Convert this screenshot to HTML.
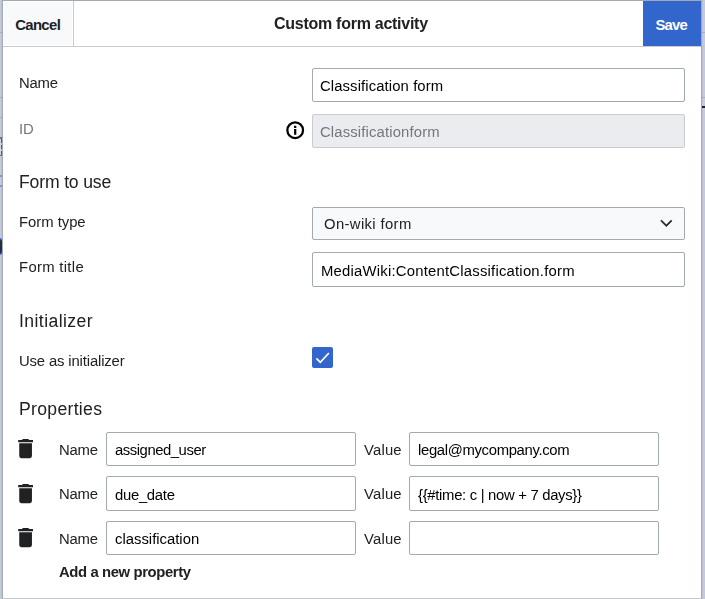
<!DOCTYPE html>
<html lang="en">
<head>
<meta charset="utf-8">
<title>Custom form activity</title>
<style>
html,body{margin:0;padding:0;}
body{width:705px;height:599px;overflow:hidden;background:#c4cadb;font-family:"Liberation Sans",sans-serif;color:#202122;position:relative;}
.abs{position:absolute;}
.bgl{position:absolute;background:#a9afbf;height:1px;}
#dlg{position:absolute;left:2px;top:0;width:700px;height:599px;box-sizing:border-box;border:1px solid #a2a9b1;border-bottom-color:#c6c9ce;background:#fff;box-shadow:0 0 0 1px rgba(40,50,80,.045);}
#hdr{position:absolute;left:3px;top:1px;width:698px;height:45px;border-bottom:1px solid #c8ccd1;background:#fff;}
#cancel{position:absolute;left:4px;top:2px;width:68px;height:43px;background:#f8f9fa;}
#cancelb{position:absolute;left:73px;top:1px;width:1px;height:45px;background:#c8ccd1;}
#save{position:absolute;left:643px;top:1px;width:58px;height:45px;background:#3366cc;}
.t{position:absolute;white-space:nowrap;line-height:1;will-change:transform;}
#t_cancel,#t_save{will-change:auto;}
.inp{position:absolute;box-sizing:border-box;border:1px solid #a2a9b1;border-radius:2px;background:#fff;}
.inp.dis{background:#eaecf0;border-color:#c8ccd1;}
.inp.dd{background:#f8f9fa;}
</style>
</head>
<body>
<div class="bgl" style="left:0;top:32px;width:705px;"></div>
<div class="bgl" style="left:0;top:97px;width:705px;"></div>
<div class="bgl" style="left:0;top:117px;width:2px;"></div>
<div class="bgl" style="left:702px;top:106px;width:3px;height:2px;background:#1a1f3a;"></div>
<div class="abs" style="left:0;top:137px;width:2px;height:19px;background:#6f7485;"></div>
<div class="abs" style="left:0;top:139px;width:1px;height:16px;background:#d4d8dc;"></div>
<div class="abs" style="left:1px;top:139px;width:1px;height:16px;background:#c9cdd6;"></div>
<div class="abs" style="left:1px;top:139px;width:1px;height:4px;background:#8a4b3c;"></div>
<div class="abs" style="left:1px;top:145px;width:1px;height:4px;background:#8a4b3c;"></div>
<div class="abs" style="left:1px;top:151px;width:1px;height:4px;background:#8a4b3c;"></div>
<div class="abs" style="left:0;top:175px;width:2px;height:2px;background:#7d9ad6;"></div>
<div class="abs" style="left:0;top:185px;width:2px;height:2px;background:#7d9ad6;"></div>
<div class="abs" style="left:-3px;top:238px;width:5px;height:17px;border-radius:3px;background:#2b59b8;"></div>
<div class="abs" style="left:-3px;top:240px;width:5px;height:13px;border-radius:2px;background:#272c42;"></div>
<div id="dlg"></div>
<div id="hdr"></div>
<div id="cancel"></div><div id="cancelb"></div>
<div id="save"></div>
<div class="t" id="t_cancel" style="left:15.16px;top:18.32px;font-size:14.857px;letter-spacing:-0.613px;font-weight:bold;">Cancel</div>
<div class="t" id="t_title" style="left:274.25px;top:15.86px;font-size:16px;letter-spacing:-0.268px;font-weight:bold;">Custom form activity</div>
<div class="t" id="t_save" style="left:655.39px;top:18.42px;font-size:14.857px;letter-spacing:-0.774px;font-weight:bold;color:#ffffff;">Save</div>

<div class="t" id="l_name" style="left:18.90px;top:76.22px;font-size:14.857px;letter-spacing:-0.233px;">Name</div>
<div class="inp" id="i_name" style="left:312px;top:68px;width:373px;height:34px;"></div>
<div class="t" id="v_name" style="left:319.90px;top:79.22px;font-size:14.857px;letter-spacing:0.105px;color:#000000;">Classification form</div>

<div class="t" id="l_id" style="left:19.20px;top:122.32px;font-size:14.857px;letter-spacing:-0.207px;color:#72777d;">ID</div>
<svg class="abs" id="ic_info" style="left:283.85px;top:118.65px;" width="22.4" height="22.4" viewBox="0 0 20 20"><path d="M4 10a6 6 0 1 0 12 0 6 6 0 0 0-12 0m6-8a8 8 0 1 1 0 16 8 8 0 0 1 0-16m1 7v5H9V9zm0-1V6H9v2z" fill="#000"/></svg>
<div class="inp dis" id="i_id" style="left:312px;top:114px;width:373px;height:34px;"></div>
<div class="t" id="v_id" style="left:319.90px;top:125.32px;font-size:14.857px;letter-spacing:0.145px;color:#72777d;">Classificationform</div>

<div class="t" id="h_form" style="left:19.10px;top:173.60px;font-size:17.6px;letter-spacing:-0.160px;">Form to use</div>

<div class="t" id="l_ftype" style="left:18.56px;top:214.82px;font-size:14.857px;letter-spacing:-0.024px;">Form type</div>
<div class="inp dd" id="i_ftype" style="left:312px;top:207px;width:373px;height:33px;"></div>
<div class="t" id="v_ftype" style="left:324.43px;top:217.02px;font-size:14.857px;letter-spacing:0.360px;">On-wiki form</div>
<svg class="abs" id="ic_chev" style="left:660.1px;top:217.2px;overflow:visible;" width="12.73" height="12.73" viewBox="0 0 20 20"><path d="m17.500 4.750-7.500 7.500-7.500-7.500L1 6.250l9 9 9-9z" fill="#202122" stroke="#202122" stroke-width="0.700" stroke-linejoin="miter"/></svg>

<div class="t" id="l_ftitle" style="left:18.56px;top:259.82px;font-size:14.857px;letter-spacing:0.312px;">Form title</div>
<div class="inp" id="i_ftitle" style="left:312px;top:252px;width:373px;height:35px;"></div>
<div class="t" id="v_ftitle" style="left:320.61px;top:264.32px;font-size:14.857px;letter-spacing:0.220px;color:#000000;">MediaWiki:ContentClassification.form</div>

<div class="t" id="h_init" style="left:18.80px;top:312.70px;font-size:17.6px;letter-spacing:0.415px;">Initializer</div>

<div class="t" id="l_use" style="left:19.20px;top:354.32px;font-size:14.857px;letter-spacing:-0.142px;">Use as initializer</div>
<div class="abs" id="cb" style="left:312px;top:347px;width:21px;height:21px;background:#3366cc;border-radius:2px;"></div>
<svg class="abs" id="ic_chk" style="left:315px;top:351px;" width="15" height="13" viewBox="0 0 15 13"><path d="M1.400 7.400 L5.300 11.300 L13.900 2" fill="none" stroke="#fff" stroke-width="1.700"/></svg>

<div class="t" id="h_props" style="left:18.80px;top:400.60px;font-size:17.6px;letter-spacing:0.311px;">Properties</div>

<svg class="abs" id="tr1" style="left:15.05px;top:437.75px;" width="21.2" height="21.2" viewBox="0 0 20 20"><path d="M17 2h-3.500l-1-1h-5l-1 1H3v2h14zM4 17a2 2 0 0 0 2 2h8a2 2 0 0 0 2-2V5H4z" fill="#202122"/></svg>
<div class="t" id="p1_n" style="left:58.90px;top:443.32px;font-size:14.857px;letter-spacing:-0.233px;">Name</div>
<div class="inp" id="i_p1n" style="left:106px;top:432px;width:250px;height:34px;"></div>
<div class="t" id="p1_nv" style="left:114.74px;top:443.32px;font-size:14.857px;letter-spacing:-0.451px;color:#000000;">assigned_user</div>
<div class="t" id="p1_v" style="left:363.55px;top:443.32px;font-size:14.857px;letter-spacing:0.178px;">Value</div>
<div class="inp" id="i_p1v" style="left:409px;top:432px;width:250px;height:34px;"></div>
<div class="t" id="p1_vv" style="left:417.95px;top:443.32px;font-size:14.857px;letter-spacing:-0.325px;color:#000000;">legal@mycompany.com</div>

<svg class="abs" id="tr2" style="left:15.05px;top:482.80px;" width="21.2" height="21.2" viewBox="0 0 20 20"><path d="M17 2h-3.500l-1-1h-5l-1 1H3v2h14zM4 17a2 2 0 0 0 2 2h8a2 2 0 0 0 2-2V5H4z" fill="#202122"/></svg>
<div class="t" id="p2_n" style="left:58.90px;top:486.82px;font-size:14.857px;letter-spacing:-0.233px;">Name</div>
<div class="inp" id="i_p2n" style="left:106px;top:476px;width:250px;height:35px;"></div>
<div class="t" id="p2_nv" style="left:114.76px;top:487.72px;font-size:14.857px;letter-spacing:-0.287px;color:#000000;">due_date</div>
<div class="t" id="p2_v" style="left:363.55px;top:486.82px;font-size:14.857px;letter-spacing:0.178px;">Value</div>
<div class="inp" id="i_p2v" style="left:409px;top:476px;width:250px;height:35px;"></div>
<div class="t" id="p2_vv" style="left:418.19px;top:487.72px;font-size:14.857px;letter-spacing:-0.302px;color:#000000;">{{#time: c | now + 7 days}}</div>

<svg class="abs" id="tr3" style="left:15.05px;top:526.90px;" width="21.2" height="21.2" viewBox="0 0 20 20"><path d="M17 2h-3.500l-1-1h-5l-1 1H3v2h14zM4 17a2 2 0 0 0 2 2h8a2 2 0 0 0 2-2V5H4z" fill="#202122"/></svg>
<div class="t" id="p3_n" style="left:58.90px;top:532.12px;font-size:14.857px;letter-spacing:-0.233px;">Name</div>
<div class="inp" id="i_p3n" style="left:106px;top:521px;width:250px;height:34px;"></div>
<div class="t" id="p3_nv" style="left:114.78px;top:532.12px;font-size:14.857px;letter-spacing:0.002px;color:#000000;">classification</div>
<div class="t" id="p3_v" style="left:363.55px;top:532.12px;font-size:14.857px;letter-spacing:0.178px;">Value</div>
<div class="inp" id="i_p3v" style="left:409px;top:521px;width:250px;height:34px;"></div>

<div class="t" id="t_add" style="left:59.33px;top:565.02px;font-size:14.857px;letter-spacing:-0.384px;font-weight:bold;">Add a new property</div>
</body>
</html>
